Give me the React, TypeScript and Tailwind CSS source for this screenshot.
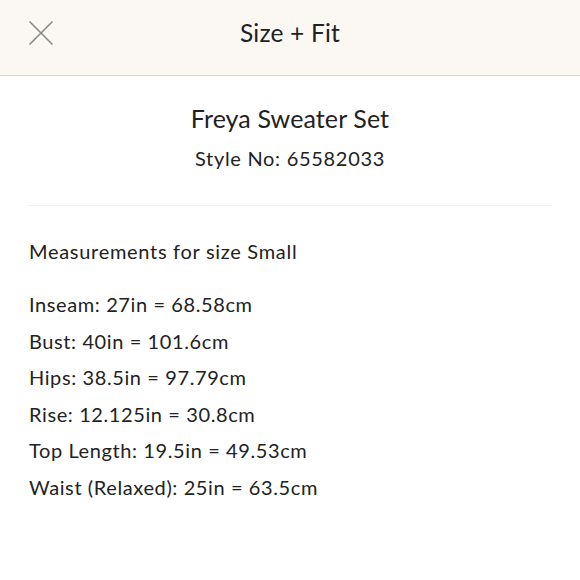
import React from "react";

const rows = [
  "Inseam: 27in = 68.58cm",
  "Bust: 40in = 101.6cm",
  "Hips: 38.5in = 97.79cm",
  "Rise: 12.125in = 30.8cm",
  "Top Length: 19.5in = 49.53cm",
  "Waist (Relaxed): 25in = 63.5cm",
];

export default function App() {
  return (
    <div className="w-[580px] h-[580px] bg-white text-[#222] overflow-hidden" style={{ fontFamily: "Lato, 'Noto Sans', sans-serif" }}>
      <div className="relative h-[76px] bg-[#fbf8f4] border-b border-[#dcd9d5] flex items-center justify-center">
        <svg className="absolute left-[29px] top-[21px]" width="24" height="24" viewBox="0 0 24 24" fill="none" stroke="#8a8683" strokeWidth="1.5">
          <path d="M0.5 0.5 L23.5 23.5 M23.5 0.5 L0.5 23.5" />
        </svg>
        <div className="text-[24.5px] leading-[32px] tracking-[0.2px] -mt-[10px]">Size + Fit</div>
      </div>
      <div className="flex flex-col items-center pt-[25px]">
        <div className="text-[25px] leading-[34px] tracking-[0.1px]">Freya Sweater Set</div>
        <div className="text-[20px] leading-[28px] mt-[9px] tracking-[0.7px]">Style No: 65582033</div>
      </div>
      <div className="mx-[28px] mt-[33px] border-t border-[#efefef]"></div>
      <div className="px-[29px] pt-[31px]">
        <div className="text-[20px] leading-[28px] tracking-[0.7px]">Measurements for size Small</div>
        <div className="mt-[21px] flex flex-col">
          {rows.map((r) => (
            <div key={r} className="text-[20px] leading-[36.5px] tracking-[0.6px]">{r}</div>
          ))}
        </div>
      </div>
    </div>
  );
}
